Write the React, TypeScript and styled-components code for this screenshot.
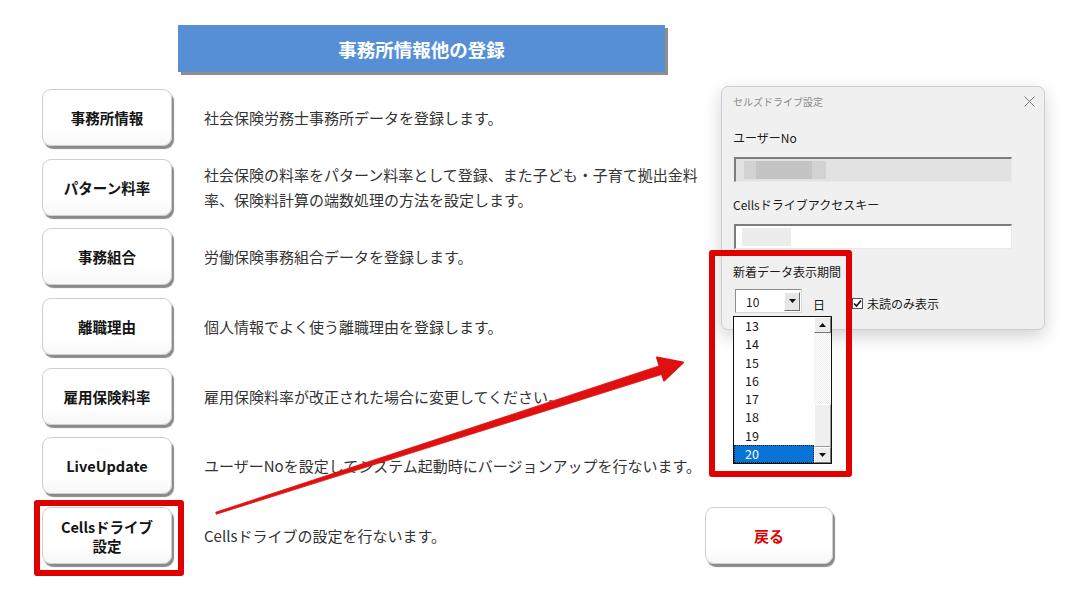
import React from "react";
import styled, { createGlobalStyle } from "styled-components";

const GlobalStyle = createGlobalStyle`
  html, body {
    margin: 0;
    background: #ffffff;
  }
  body {
    font-family: "Noto Sans CJK JP", "Noto Sans", sans-serif;
  }
`;

const menu = [
  { label: "事務所情報", text: "社会保険労務士事務所データを登録します。" },
  {
    label: "パターン料率",
    text: "社会保険の料率をパターン料率として登録、また子ども・子育て拠出金料率、保険料計算の端数処理の方法を設定します。",
  },
  { label: "事務組合", text: "労働保険事務組合データを登録します。" },
  { label: "離職理由", text: "個人情報でよく使う離職理由を登録します。" },
  { label: "雇用保険料率", text: "雇用保険料率が改正された場合に変更してください。" },
  { label: "LiveUpdate", text: "ユーザーNoを設定してシステム起動時にバージョンアップを行ないます。" },
];

const days = [13, 14, 15, 16, 17, 18, 19, 20];

const Page = styled.div`
  position: relative;
  width: 1083px;
  height: 594px;
  box-sizing: border-box;
  padding: 25px 0 0 42px;
  overflow: hidden;
`;

const TitleBar = styled.div`
  margin-left: 136px;
  width: 487px;
  height: 47px;
  background: #578fd6;
  box-shadow: 3px 3px 0 #8e8e8e;
  color: #ffffff;
  font-size: 18.5px;
  font-weight: 700;
  display: flex;
  align-items: center;
  justify-content: center;
`;

const MenuList = styled.div`
  margin-top: 17px;
  display: flex;
  flex-direction: column;
  gap: 12.7px;
`;

const MenuRow = styled.div`
  display: flex;
  align-items: center;
`;

const MenuButton = styled.div<{ $accent?: boolean }>`
  flex: none;
  width: 130px;
  height: 57px;
  box-sizing: border-box;
  border: 1px solid #cfcfcf;
  border-radius: 9px;
  background: linear-gradient(#ffffff 70%, #f7f7f7);
  box-shadow: 2px 3px 1px #8a8a8a;
  display: flex;
  align-items: center;
  justify-content: center;
  text-align: center;
  font-size: 14.5px;
  font-weight: 700;
  line-height: 19px;
  color: ${(p) => (p.$accent ? "#e00000" : "#141414")};
`;

const Description = styled.div`
  margin-left: 32px;
  width: 500px;
  font-size: 15px;
  line-height: 25px;
  color: #333333;
`;

const BackButton = styled(MenuButton)`
  width: 128px;
  margin-left: 1px;
  font-size: 15px;
`;

/* settings window */
const Dialog = styled.div`
  position: absolute;
  left: 721px;
  top: 86px;
  width: 324px;
  height: 244px;
  box-sizing: border-box;
  background: #f0f0f0;
  border: 1px solid #cdcdcd;
  border-radius: 7px;
  box-shadow: 0 6px 18px rgba(0, 0, 0, 0.18);
  padding: 0 0 0 11px;
  font-size: 12px;
  color: #1a1a1a;
`;

const DialogHead = styled.div`
  height: 29px;
  display: flex;
  align-items: center;
  justify-content: space-between;
  padding-right: 9px;
  font-size: 10px;
  color: #8a8a8a;
`;

const FieldLabel = styled.div<{ $gap: number }>`
  margin-top: ${(p) => p.$gap}px;
  line-height: 18px;
`;

const TextField = styled.div<{ $readOnly?: boolean }>`
  position: relative;
  margin: 10px 0 0 1px;
  width: 278px;
  height: 25px;
  box-sizing: border-box;
  background: ${(p) => (p.$readOnly ? "#e2e2e2" : "#ffffff")};
  border-top: 2px solid #7d7d7d;
  border-left: 2px solid #7d7d7d;
  border-right: 1px solid #e9e9e9;
  border-bottom: 1px solid #e9e9e9;
`;

const Smudge = styled.span<{ $left: number; $width: number; $tone: string }>`
  position: absolute;
  top: 2px;
  bottom: 2px;
  left: ${(p) => p.$left}px;
  width: ${(p) => p.$width}px;
  background: ${(p) => p.$tone};
  filter: blur(0.6px);
`;

const ComboRow = styled.div`
  margin-top: 8px;
  display: flex;
  align-items: center;
  height: 24px;
`;

const Combo = styled.div`
  margin-left: 2px;
  width: 67px;
  height: 24px;
  box-sizing: border-box;
  background: #ffffff;
  border: 1px solid #8d8d8d;
  border-right-color: #d8d8d8;
  border-bottom-color: #d8d8d8;
  display: flex;
  align-items: center;
  justify-content: space-between;
  padding: 0 1px 0 10px;
  font-size: 12px;
`;

const ArrowButton = styled.div`
  width: 16px;
  height: 19px;
  box-sizing: border-box;
  background: #e6e6e6;
  border: 1px solid #ffffff;
  border-right-color: #6e6e6e;
  border-bottom-color: #6e6e6e;
  display: flex;
  align-items: center;
  justify-content: center;
`;

const DayUnit = styled.span`
  margin: 6px 0 0 11px;
`;

const CheckLabel = styled.label`
  margin: 4px 0 0 27px;
  display: flex;
  align-items: center;
  gap: 4px;
`;

const CheckBox = styled.span`
  width: 11px;
  height: 11px;
  box-sizing: border-box;
  background: #ffffff;
  border: 1px solid #555555;
  display: flex;
  align-items: center;
  justify-content: center;
`;

/* open drop-down of the combo */
const DropList = styled.div`
  position: absolute;
  left: 733px;
  top: 316px;
  width: 99px;
  height: 148px;
  box-sizing: border-box;
  background: #ffffff;
  border: 1px solid #111111;
  display: flex;
`;

const Options = styled.div`
  flex: 1;
  display: flex;
  flex-direction: column;
`;

const Option = styled.div<{ $selected?: boolean }>`
  height: 18.25px;
  line-height: 18px;
  padding-left: 11px;
  font-size: 12.5px;
  color: ${(p) => (p.$selected ? "#ffffff" : "#1a1a1a")};
  background: ${(p) => (p.$selected ? "#0a74d6" : "transparent")};
  outline: ${(p) => (p.$selected ? "1px dotted #222" : "none")};
  outline-offset: -1px;
`;

const ScrollBar = styled.div`
  width: 17px;
  display: flex;
  flex-direction: column;
  background: repeating-conic-gradient(#ececec 0 25%, #ffffff 0 50%) 0 0 / 2px 2px;
`;

const ScrollButton = styled.div`
  height: 16px;
  box-sizing: border-box;
  background: #ececec;
  border: 1px solid #ffffff;
  border-right-color: #777777;
  border-bottom-color: #777777;
  display: flex;
  align-items: center;
  justify-content: center;
`;

const ScrollTrack = styled.div`
  flex: 1;
  display: flex;
  flex-direction: column;
  justify-content: flex-end;
`;

const ScrollThumb = styled.div`
  height: 43px;
  box-sizing: border-box;
  background: #efefef;
  border: 1px solid #ffffff;
  border-right-color: #9a9a9a;
  border-bottom-color: #9a9a9a;
`;

const Highlight = styled.div<{ $left: number; $top: number; $width: number; $height: number }>`
  position: absolute;
  left: ${(p) => p.$left}px;
  top: ${(p) => p.$top}px;
  width: ${(p) => p.$width}px;
  height: ${(p) => p.$height}px;
  box-sizing: border-box;
  border: 6px solid #e00000;
  border-radius: 3px;
  pointer-events: none;
`;

const Overlay = styled.svg`
  position: absolute;
  left: 0;
  top: 0;
  pointer-events: none;
`;

const Triangle: React.FC<{ up?: boolean }> = ({ up }) => (
  <svg width="7" height="4" viewBox="0 0 7 4">
    <path d={up ? "M0 4 L3.5 0 L7 4 Z" : "M0 0 L7 0 L3.5 4 Z"} fill="#111" />
  </svg>
);

export default function App() {
  return (
    <>
      <GlobalStyle />
      <Page>
        <TitleBar>事務所情報他の登録</TitleBar>
        <MenuList>
          {menu.map((m) => (
            <MenuRow key={m.label}>
              <MenuButton>{m.label}</MenuButton>
              <Description>{m.text}</Description>
            </MenuRow>
          ))}
          <MenuRow>
            <MenuButton>
              Cellsドライブ
              <br />
              設定
            </MenuButton>
            <Description>Cellsドライブの設定を行ないます。</Description>
            <BackButton $accent>戻る</BackButton>
          </MenuRow>
        </MenuList>

        <Dialog>
          <DialogHead>
            <span>セルズドライブ設定</span>
            <svg width="11" height="11" viewBox="0 0 11 11">
              <path d="M0.5 0.5 L10.5 10.5 M10.5 0.5 L0.5 10.5" stroke="#7a7a7a" strokeWidth="1" />
            </svg>
          </DialogHead>
          <FieldLabel $gap={13}>ユーザーNo</FieldLabel>
          <TextField $readOnly>
            <Smudge $left={8} $width={82} $tone="#d2d2d2" />
            <Smudge $left={20} $width={56} $tone="#c4c4c4" />
          </TextField>
          <FieldLabel $gap={14}>Cellsドライブアクセスキー</FieldLabel>
          <TextField>
            <Smudge $left={6} $width={49} $tone="#ececec" />
          </TextField>
          <FieldLabel $gap={14}>新着データ表示期間</FieldLabel>
          <ComboRow>
            <Combo>
              <span>10</span>
              <ArrowButton>
                <Triangle />
              </ArrowButton>
            </Combo>
            <DayUnit>日</DayUnit>
            <CheckLabel>
              <CheckBox>
                <svg width="9" height="9" viewBox="0 0 9 9">
                  <path d="M1 4.5 L3.5 7 L8 1.5" fill="none" stroke="#111" strokeWidth="1.6" />
                </svg>
              </CheckBox>
              未読のみ表示
            </CheckLabel>
          </ComboRow>
        </Dialog>

        <DropList>
          <Options>
            {days.map((d) => (
              <Option key={d} $selected={d === 20}>
                {d}
              </Option>
            ))}
          </Options>
          <ScrollBar>
            <ScrollButton>
              <Triangle up />
            </ScrollButton>
            <ScrollTrack>
              <ScrollThumb />
            </ScrollTrack>
            <ScrollButton>
              <Triangle />
            </ScrollButton>
          </ScrollBar>
        </DropList>

        <Highlight $left={34} $top={500} $width={150} $height={76} />
        <Highlight $left={709} $top={250} $width={143} $height={227} />

        <Overlay width="1083" height="594" viewBox="0 0 1083 594">
          <g fill="#e01010" stroke="#e01010" strokeLinejoin="round">
            <path d="M216.3 514.2 L215.7 512.2 L662.6 364.7 L665.4 373.3 Z" strokeWidth="0.8" />
            <path d="M683 362.5 L657 357.5 L664 380.5 Z" strokeWidth="2" />
          </g>
        </Overlay>
      </Page>
    </>
  );
}
